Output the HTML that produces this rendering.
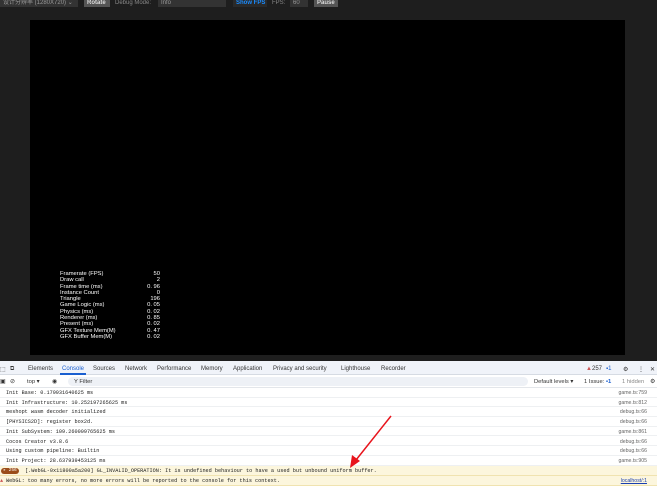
<!DOCTYPE html>
<html><head><style>
*{margin:0;padding:0;box-sizing:border-box}
body{width:657px;height:500px;overflow:hidden;background:#fff;font-family:"Liberation Sans",sans-serif;position:relative}
.a{position:absolute}
#top{left:0;top:0;width:657px;height:361px;background:#1e1e1e}
.ctl{position:absolute;top:0;height:7px;background:#333;color:#999;font-size:6px;line-height:7px;padding-left:3px;white-space:nowrap}
.lbl{position:absolute;top:0;font-size:6px;line-height:7px;color:#888}
#cv{left:30px;top:20px;width:595px;height:335px;background:#000}
#stats{left:60px;top:271px;color:#fff;font-size:5.8px;line-height:6.3px}
#stats div{width:100px;display:flex;justify-content:space-between}
#tabs{left:0;top:361px;width:657px;height:14px;background:#f0f3f9;border-bottom:1px solid #d6dbe3;font-size:6px;color:#333}
#tabs span{position:absolute;top:5px;white-space:nowrap}
#tb{left:0;top:375px;width:657px;height:13px;background:#fff;border-bottom:1px solid #e3e6ea;font-size:5.8px;color:#333}
#tb span{position:absolute;top:3.5px;white-space:nowrap}
.row{position:absolute;left:0;width:657px;height:9.7px;border-bottom:1px solid #eef0f2;font-family:"Liberation Mono",monospace;font-size:5.2px;line-height:10px;color:#222;white-space:nowrap}
.row .m{position:absolute;left:6px}
.row .s{position:absolute;right:10px;color:#666;font-family:"Liberation Sans",sans-serif}
</style></head><body>
<div id="top" class="a">
<div class="ctl" style="left:0;width:78px">设计分辨率 (1280X720) ⌄</div>
<div class="ctl" style="left:84px;width:26px;background:#555;color:#ddd;font-weight:bold">Rotate</div>
<div class="lbl" style="left:115px">Debug Mode:</div>
<div class="ctl" style="left:158px;width:68px">Info</div>
<div class="ctl" style="left:233px;width:34px;color:#1a8cff;font-weight:bold;background:#2a2a2a">Show FPS</div>
<div class="lbl" style="left:272px">FPS:</div>
<div class="ctl" style="left:290px;width:18px">60</div>
<div class="ctl" style="left:314px;width:24px;background:#555;color:#ddd;font-weight:bold">Pause</div>
</div>
<div id="cv" class="a"></div>
<div id="stats" class="a">
<div><span>Framerate (FPS)</span><span>50</span></div>
<div><span>Draw call</span><span>2</span></div>
<div><span>Frame time (ms)</span><span>0. 96</span></div>
<div><span>Instance Count</span><span>0</span></div>
<div><span>Triangle</span><span>196</span></div>
<div><span>Game Logic (ms)</span><span>0. 05</span></div>
<div><span>Physics (ms)</span><span>0. 02</span></div>
<div><span>Renderer (ms)</span><span>0. 85</span></div>
<div><span>Present (ms)</span><span>0. 02</span></div>
<div><span>GFX Texture Mem(M)</span><span>0. 47</span></div>
<div><span>GFX Buffer Mem(M)</span><span>0. 02</span></div>
</div>
<div id="tabs" class="a">
<span style="left:0">⬚</span><span style="left:10px">⧉</span>
<span style="left:28px">Elements</span>
<span style="left:62px;color:#1a5fd0">Console</span>
<div class="a" style="left:60px;top:12px;width:26px;height:2px;background:#1a5fd0"></div>
<span style="left:93px">Sources</span><span style="left:125px">Network</span><span style="left:157px">Performance</span><span style="left:201px">Memory</span><span style="left:233px">Application</span><span style="left:273px">Privacy and security</span><span style="left:341px">Lighthouse</span><span style="left:381px">Recorder</span>
<span style="left:586px;color:#c55">▲</span><span style="left:592px">257</span><span style="left:606px;color:#1a5fd0">▪1</span><span style="left:623px">⚙</span><span style="left:638px">⋮</span><span style="left:650px">✕</span>
</div>
<div id="tb" class="a">
<span style="left:0">▣</span><span style="left:10px">⊘</span><span style="left:27px">top ▾</span><span style="left:52px">◉</span>
<div class="a" style="left:68px;top:2px;width:460px;height:9px;background:#eef1f6;border-radius:5px"></div>
<span style="left:74px">Y Filter</span>
<span style="left:534px">Default levels ▾</span><span style="left:584px">1 Issue: <b style="color:#1a5fd0">▪1</b></span><span style="left:622px;color:#888">1 hidden</span><span style="left:650px">⚙</span>
</div>
<div class="row" style="top:388px"><span class="m">Init Base: 0.179931640625 ms</span><span class="s">game.ts:759</span></div>
<div class="row" style="top:397.7px"><span class="m">Init Infrastructure: 10.252197265625 ms</span><span class="s">game.ts:812</span></div>
<div class="row" style="top:407.4px"><span class="m">meshopt wasm decoder initialized</span><span class="s">debug.ts:66</span></div>
<div class="row" style="top:417.1px"><span class="m">[PHYSICS2D]: register box2d.</span><span class="s">debug.ts:66</span></div>
<div class="row" style="top:426.8px"><span class="m">Init SubSystem: 109.260009765625 ms</span><span class="s">game.ts:861</span></div>
<div class="row" style="top:436.5px"><span class="m">Cocos Creator v3.8.6</span><span class="s">debug.ts:66</span></div>
<div class="row" style="top:446.2px"><span class="m">Using custom pipeline: Builtin</span><span class="s">debug.ts:66</span></div>
<div class="row" style="top:455.9px"><span class="m">Init Project: 28.637939453125 ms</span><span class="s">game.ts:905</span></div>
<div class="row" style="top:466px;background:#fcf6dd;border-color:#f0e3b0"><span class="a" style="left:1px;top:1.5px;width:18px;height:6px;background:#9b4d1a;border-radius:3px;color:#fff;font-size:4.5px;line-height:6px;text-align:center">▸ 256</span><span class="m" style="left:25px">[.WebGL-0x11800a5a200] GL_INVALID_OPERATION: It is undefined behaviour to have a used but unbound uniform buffer.</span></div>
<div class="row" style="top:476px;background:#fcf6dd;border-color:#f0e3b0"><span class="m" style="left:0;color:#c55">▲</span><span class="m" style="left:6px">WebGL: too many errors, no more errors will be reported to the console for this context.</span><span class="s" style="color:#1a3fb0;text-decoration:underline">localhost/:1</span></div>
<svg class="a" style="left:0;top:0" width="657" height="500"><line x1="391" y1="416" x2="356" y2="460" stroke="#e8141c" stroke-width="1.5"/><polygon points="350,468 352,455 360,461" fill="#e8141c"/></svg>
</body></html>
